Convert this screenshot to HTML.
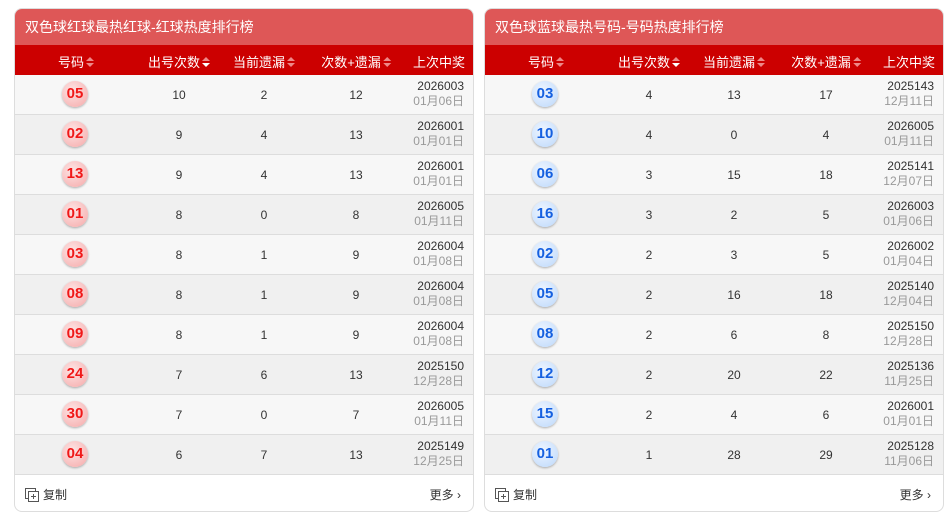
<!DOCTYPE html>
<html><head><meta charset="utf-8"><style>
*{margin:0;padding:0;box-sizing:border-box}
body{width:947px;height:518px;background:#fff;font-family:"Liberation Sans","Microsoft YaHei","Noto Sans CJK SC",sans-serif;position:relative;overflow:hidden}
.p{position:absolute;top:8px;width:460px;height:504px;border:1px solid #ddd;border-radius:8px;overflow:hidden;background:#fff}
.t{height:36px;background:#de5757;color:#fff;font-size:14px;line-height:36px;padding-left:10px}
.h{height:30px;background:#cc0000;color:#fff;font-size:13px;position:relative}
.h span,.r span{position:absolute;transform:translateX(-50%);white-space:nowrap}
.h span{top:7px}
.ar{display:inline-block;width:8px;height:11px;vertical-align:-1px;margin-left:2px;position:relative}
.ar:before,.ar:after{content:"";position:absolute;left:0;border-left:4px solid transparent;border-right:4px solid transparent}
.ar:before{top:0;border-bottom:4px solid #e88}
.ar:after{top:6px;border-top:4px solid #e88}
.ar.dn:after{border-top-color:#fff}
.r{height:40px;border-bottom:1px solid #ddd;position:relative;font-size:12px;color:#333}
.r:nth-child(odd){background:#f7f7f7}.r:nth-child(even){background:#f0f0f0}
.r span{top:13px}
.b{position:absolute;left:47px;top:6px;width:26px;height:26px;border-radius:50%;font-weight:bold;font-size:15px;line-height:26px;text-align:center;box-shadow:0 1px 2px rgba(0,0,0,.3)}
.red{background:radial-gradient(circle at 40% 35%,#fde4e4,#f5a9a9);color:#f01818}
.blue{background:radial-gradient(circle at 40% 35%,#eef5ff,#bcd8fb);color:#1560e0}
.d{position:absolute;right:9px;top:4px;text-align:right;line-height:15px;font-size:12px}
.d i{font-style:normal;color:#999;display:block}
.f{height:37px;position:relative;font-size:12px;color:#333}
.cp{position:absolute;left:10px;top:11px}
.cp svg{vertical-align:-3px;margin-right:4px}
.mo{position:absolute;right:12px;top:11px}
</style></head><body>
<div class="p" style="left:14px">
<div class="t">双色球红球最热红球-红球热度排行榜</div>
<div class="h"><span style="left:61px">号码<i class="ar"></i></span><span style="left:164px">出号次数<i class="ar dn"></i></span><span style="left:249px">当前遗漏<i class="ar"></i></span><span style="left:341px">次数+遗漏<i class="ar"></i></span><span style="left:424px">上次中奖</span></div>
<div>
<div class="r"><div class="b red">05</div><span style="left:164px">10</span><span style="left:249px">2</span><span style="left:341px">12</span><div class="d">2026003<i>01月06日</i></div></div>
<div class="r"><div class="b red">02</div><span style="left:164px">9</span><span style="left:249px">4</span><span style="left:341px">13</span><div class="d">2026001<i>01月01日</i></div></div>
<div class="r"><div class="b red">13</div><span style="left:164px">9</span><span style="left:249px">4</span><span style="left:341px">13</span><div class="d">2026001<i>01月01日</i></div></div>
<div class="r"><div class="b red">01</div><span style="left:164px">8</span><span style="left:249px">0</span><span style="left:341px">8</span><div class="d">2026005<i>01月11日</i></div></div>
<div class="r"><div class="b red">03</div><span style="left:164px">8</span><span style="left:249px">1</span><span style="left:341px">9</span><div class="d">2026004<i>01月08日</i></div></div>
<div class="r"><div class="b red">08</div><span style="left:164px">8</span><span style="left:249px">1</span><span style="left:341px">9</span><div class="d">2026004<i>01月08日</i></div></div>
<div class="r"><div class="b red">09</div><span style="left:164px">8</span><span style="left:249px">1</span><span style="left:341px">9</span><div class="d">2026004<i>01月08日</i></div></div>
<div class="r"><div class="b red">24</div><span style="left:164px">7</span><span style="left:249px">6</span><span style="left:341px">13</span><div class="d">2025150<i>12月28日</i></div></div>
<div class="r"><div class="b red">30</div><span style="left:164px">7</span><span style="left:249px">0</span><span style="left:341px">7</span><div class="d">2026005<i>01月11日</i></div></div>
<div class="r"><div class="b red">04</div><span style="left:164px">6</span><span style="left:249px">7</span><span style="left:341px">13</span><div class="d">2025149<i>12月25日</i></div></div>
</div>
<div class="f"><div class="cp"><svg width="14" height="14" viewBox="0 0 14 14" fill="none" stroke="#555" stroke-width="1"><path d="M3.5 10.5H.5V.5h10v3"/><rect x="3.5" y="3.5" width="10" height="10"/><path d="M8.5 6v5M6 8.5h5"/></svg>复制</div><div class="mo">更多 ›</div></div>
</div>
<div class="p" style="left:484px">
<div class="t">双色球蓝球最热号码-号码热度排行榜</div>
<div class="h"><span style="left:61px">号码<i class="ar"></i></span><span style="left:164px">出号次数<i class="ar dn"></i></span><span style="left:249px">当前遗漏<i class="ar"></i></span><span style="left:341px">次数+遗漏<i class="ar"></i></span><span style="left:424px">上次中奖</span></div>
<div>
<div class="r"><div class="b blue">03</div><span style="left:164px">4</span><span style="left:249px">13</span><span style="left:341px">17</span><div class="d">2025143<i>12月11日</i></div></div>
<div class="r"><div class="b blue">10</div><span style="left:164px">4</span><span style="left:249px">0</span><span style="left:341px">4</span><div class="d">2026005<i>01月11日</i></div></div>
<div class="r"><div class="b blue">06</div><span style="left:164px">3</span><span style="left:249px">15</span><span style="left:341px">18</span><div class="d">2025141<i>12月07日</i></div></div>
<div class="r"><div class="b blue">16</div><span style="left:164px">3</span><span style="left:249px">2</span><span style="left:341px">5</span><div class="d">2026003<i>01月06日</i></div></div>
<div class="r"><div class="b blue">02</div><span style="left:164px">2</span><span style="left:249px">3</span><span style="left:341px">5</span><div class="d">2026002<i>01月04日</i></div></div>
<div class="r"><div class="b blue">05</div><span style="left:164px">2</span><span style="left:249px">16</span><span style="left:341px">18</span><div class="d">2025140<i>12月04日</i></div></div>
<div class="r"><div class="b blue">08</div><span style="left:164px">2</span><span style="left:249px">6</span><span style="left:341px">8</span><div class="d">2025150<i>12月28日</i></div></div>
<div class="r"><div class="b blue">12</div><span style="left:164px">2</span><span style="left:249px">20</span><span style="left:341px">22</span><div class="d">2025136<i>11月25日</i></div></div>
<div class="r"><div class="b blue">15</div><span style="left:164px">2</span><span style="left:249px">4</span><span style="left:341px">6</span><div class="d">2026001<i>01月01日</i></div></div>
<div class="r"><div class="b blue">01</div><span style="left:164px">1</span><span style="left:249px">28</span><span style="left:341px">29</span><div class="d">2025128<i>11月06日</i></div></div>
</div>
<div class="f"><div class="cp"><svg width="14" height="14" viewBox="0 0 14 14" fill="none" stroke="#555" stroke-width="1"><path d="M3.5 10.5H.5V.5h10v3"/><rect x="3.5" y="3.5" width="10" height="10"/><path d="M8.5 6v5M6 8.5h5"/></svg>复制</div><div class="mo">更多 ›</div></div>
</div>
</body></html>
